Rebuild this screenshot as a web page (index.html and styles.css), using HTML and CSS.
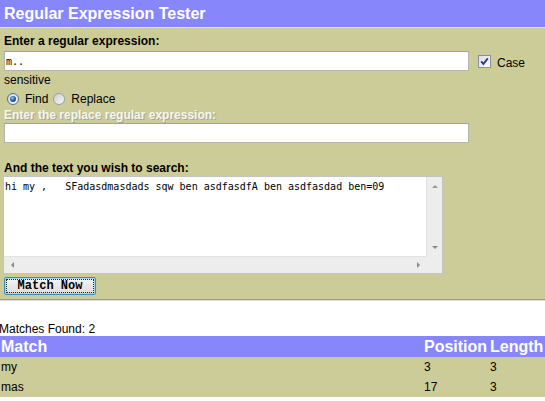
FILE: index.html
```html
<!DOCTYPE html>
<html>
<head>
<meta charset="utf-8">
<title>Regular Expression Tester</title>
<link rel="stylesheet" href="styles.css">
</head>
<body>
<div class="header">Regular Expression Tester</div>
<form class="panel" autocomplete="off">
  <div class="label">Enter a regular expression:</div>
  <div class="regex-row">
    <input class="field mono" type="text" value="m.." spellcheck="false" autocomplete="off">
    <span class="checkbox">
      <svg width="13" height="13" viewBox="0 0 13 13">
        <defs>
          <linearGradient id="cbg" x1="0" y1="0" x2="1" y2="1">
            <stop offset="0" stop-color="#d9dbe3"/>
            <stop offset="1" stop-color="#ffffff"/>
          </linearGradient>
        </defs>
        <rect x="0.5" y="0.5" width="12" height="12" fill="url(#cbg)" stroke="#8b8fa3"/>
        <path d="M3.2 6.4 L5.4 8.9 L9.8 3.4" fill="none" stroke="#2a3f94" stroke-width="1.9"/>
      </svg>
    </span>
    <span class="case">Case</span>
  </div>
  <div class="text-line">sensitive</div>
  <div class="radio-row">
    <span class="radio">
      <svg width="12" height="12" viewBox="0 0 12 12">
        <defs>
          <linearGradient id="rbg" x1="0" y1="0" x2="1" y2="1">
            <stop offset="0" stop-color="#d2d4dc"/>
            <stop offset="1" stop-color="#ffffff"/>
          </linearGradient>
          <radialGradient id="rdot" cx="0.4" cy="0.35" r="0.7">
            <stop offset="0" stop-color="#9fd0ff"/>
            <stop offset="0.5" stop-color="#2c6fbf"/>
            <stop offset="1" stop-color="#123e74"/>
          </radialGradient>
        </defs>
        <circle cx="6" cy="6" r="5.5" fill="url(#rbg)" stroke="#4e6f93"/>
        <circle cx="6" cy="6" r="3" fill="url(#rdot)"/>
      </svg>
    </span>
    <span class="radio-label">Find</span>
    <span class="radio">
      <svg width="12" height="12" viewBox="0 0 12 12">
        <defs>
          <linearGradient id="rbg2" x1="0" y1="0" x2="1" y2="1">
            <stop offset="0" stop-color="#c9cbd0"/>
            <stop offset="1" stop-color="#fafafa"/>
          </linearGradient>
        </defs>
        <circle cx="6" cy="6" r="5.5" fill="url(#rbg2)" stroke="#9a9ea8"/>
      </svg>
    </span>
    <span class="radio-label">Replace</span>
  </div>
  <div class="label disabled">Enter the replace regular expression:</div>
  <input class="field field-replace" type="text" value="" autocomplete="off">
  <div class="label search-label">And the text you wish to search:</div>
  <div class="textbox">
    <textarea class="text mono" wrap="off" spellcheck="false">hi my ,   SFadasdmasdads sqw ben asdfasdfA ben asdfasdad ben=09</textarea>
    <div class="vbar"><span class="arr up"></span><span class="arr down"></span></div>
    <div class="hbar"><span class="arr left"></span><span class="arr right"></span></div>
    <div class="corner"></div>
  </div>
  <button class="match" type="button"><span class="focus">Match Now</span></button>
</form>
<div class="found">Matches Found: 2</div>
<div class="results">
  <div class="th">Match</div><div class="th">Position</div><div class="th">Length</div>
  <div class="td">my</div><div class="td">3</div><div class="td">3</div>
  <div class="td">mas</div><div class="td">17</div><div class="td">3</div>
</div>
</body>
</html>
```
FILE: styles.css
```css
html, body {
  margin: 0;
  padding: 0;
  background: #ffffff;
}
body {
  font-family: "Liberation Sans", Arial, sans-serif;
  font-size: 12px;
  color: #000;
  width: 545px;
  overflow: hidden;
}
.header {
  height: 27px;
  line-height: 27px;
  background: #8787fb;
  color: #ffffff;
  font-weight: bold;
  font-size: 16px;
  padding-left: 4px;
  border-bottom: 1px solid #e4e6dc;
}
.panel {
  margin: 0;
  background: #cccc99;
  padding: 6px 0 4px 4px;
  border-bottom: 1px solid #9a9a8e;
  box-shadow: 0 1px 0 #dcdcdc;
}
.label {
  font-weight: bold;
  line-height: 14px;
}
.mono {
  font-family: "DejaVu Sans Mono", "Liberation Mono", monospace;
  font-size: 10px;
  color: #000;
}
.field {
  display: block;
  box-sizing: border-box;
  width: 465px;
  height: 20px;
  margin: 0;
  padding: 0 1px;
  border: 1px solid #b4b4ae;
  border-top-color: #a2a29c;
  background: #ffffff;
  outline: none;
}
.regex-row {
  display: flex;
  align-items: center;
  margin-top: 3px;
  height: 20px;
}
.checkbox {
  display: flex;
  margin-left: 9px;
  margin-top: 1px;
}
.case {
  margin-left: 6px;
  line-height: 14px;
  margin-top: 4px;
}
.text-line {
  margin-top: 2px;
  line-height: 14px;
}
.radio-row {
  display: flex;
  align-items: center;
  margin-top: 5px;
  height: 14px;
}
.radio {
  display: flex;
  margin-left: 3px;
}
.radio + .radio-label {
  margin-left: 6px;
}
.radio-label + .radio {
  margin-left: 5px;
}
.disabled {
  margin-top: 2px;
  color: #f6f6ee;
  text-shadow: 1px 1px 0 #a7a795;
}
.field-replace {
  margin-top: 1px;
}
.search-label {
  margin-top: 18px;
}
.textbox {
  margin-top: 1px;
  margin-left: -1px;
  width: 440px;
  height: 98px;
  box-sizing: border-box;
  border: 1px solid #c4c4c4;
  background: #ffffff;
  display: grid;
  grid-template-columns: 1fr 16px;
  grid-template-rows: 1fr 17px;
}
.text {
  border: none;
  margin: 0;
  padding: 4px 1px 2px;
  resize: none;
  overflow: hidden;
  outline: none;
  white-space: pre;
  background: #ffffff;
  line-height: 12px;
}
.vbar {
  background: #ededed;
  border-left: 1px solid #e2e2e2;
  display: flex;
  flex-direction: column;
  align-items: center;
  justify-content: space-between;
  padding: 8px 0 7px;
}
.hbar {
  background: #ededed;
  border-top: 1px solid #e2e2e2;
  display: flex;
  align-items: center;
  justify-content: space-between;
  padding: 0 6px 0 7px;
}
.corner {
  background: #ededed;
}
.arr {
  display: block;
  width: 0;
  height: 0;
}
.up {
  border-left: 3px solid transparent;
  border-right: 3px solid transparent;
  border-bottom: 3px solid #9a9a9a;
}
.down {
  border-left: 3px solid transparent;
  border-right: 3px solid transparent;
  border-top: 3px solid #8a8a8a;
}
.left {
  border-top: 3px solid transparent;
  border-bottom: 3px solid transparent;
  border-right: 3px solid #8a8a8a;
}
.right {
  border-top: 3px solid transparent;
  border-bottom: 3px solid transparent;
  border-left: 3px solid #8a8a8a;
}
.match {
  display: block;
  margin-top: 3px;
  width: 92px;
  height: 18px;
  box-sizing: border-box;
  padding: 1px;
  border: 1px solid #3c8db6;
  border-radius: 2px;
  background: linear-gradient(#f5f5f5, #dcdcdc);
  box-shadow: inset 0 0 0 1px #a8d8ee;
  font-family: "Liberation Mono", "Courier New", monospace;
  font-weight: bold;
  font-size: 12px;
  color: #000;
  cursor: default;
}
.focus {
  display: block;
  height: 12px;
  line-height: 12px;
  border: 1px dotted #222;
}
.found {
  margin-top: 22px;
  line-height: 14px;
  margin-left: -1px;
}
.results {
  display: grid;
  grid-template-columns: 1fr 66px 56px;
  background: #cccc99;
}
.th {
  background: #8787fb;
  color: #ffffff;
  font-weight: bold;
  font-size: 16px;
  height: 21px;
  line-height: 21px;
  padding-left: 1px;
  white-space: nowrap;
}
.td {
  height: 20px;
  line-height: 20px;
  padding-left: 1px;
}
```
